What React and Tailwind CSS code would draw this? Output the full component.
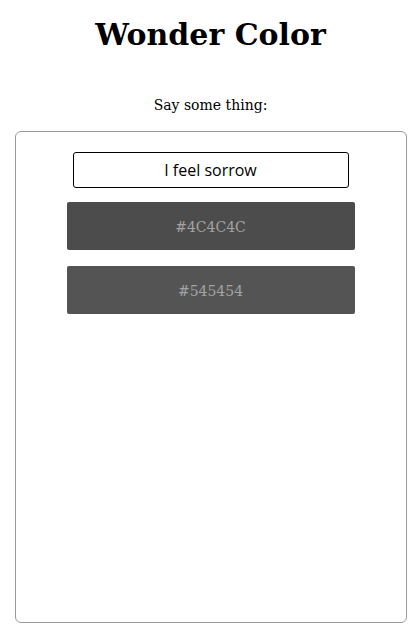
export default function App() {
  const serif = { fontFamily: '"DejaVu Serif", serif' };
  return (
    <div className="w-[418px] h-[636px] bg-white pl-[3px] flex flex-col items-center" style={serif}>
      <h1 className="mt-[17px] text-[30px] leading-[36px] font-bold text-black">Wonder Color</h1>
      <p className="mt-[42px] text-[14px] leading-[20px] text-black">Say some thing:</p>
      <div className="mt-[16px] w-[392px] h-[492px] border border-[#999999] rounded-[6px] flex flex-col items-center">
        <div
          className="mt-[20px] w-[276px] h-[36px] border border-black rounded-[3px] flex items-center justify-center text-[16px] text-black"
          style={{ fontFamily: '"Open Sans", sans-serif' }}
        >
          I feel sorrow
        </div>
        <div className="mt-[14px] w-[288px] h-[48px] pt-[3px] rounded-[2px] bg-[#4C4C4C] flex items-center justify-center text-[14px] text-[#a3a3a3]">
          #4C4C4C
        </div>
        <div className="mt-[16px] w-[288px] h-[48px] pt-[3px] rounded-[2px] bg-[#545454] flex items-center justify-center text-[14px] text-[#a3a3a3]">
          #545454
        </div>
      </div>
    </div>
  );
}
